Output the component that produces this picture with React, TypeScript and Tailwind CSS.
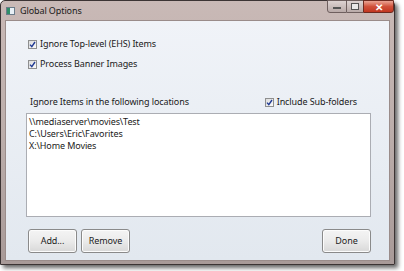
import React from "react";

function Check({ label }: { label: string }) {
  return (
    <div className="flex h-[12px] items-center gap-[3px]">
      <div className="flex h-[9px] w-[9px] items-center justify-center border border-[#8e8f8f] bg-gradient-to-br from-[#dcdcdc] to-[#fafafa]">
        <svg width="7" height="7" viewBox="0 0 7 7">
          <path d="M1 3.6 L2.8 5.6 L6 1" fill="none" stroke="#1f3a93" strokeWidth="1.4" />
        </svg>
      </div>
      <span>{label}</span>
    </div>
  );
}

function Btn({ label }: { label: string }) {
  return (
    <div className="flex h-[24px] w-[49px] items-center justify-center rounded-[3px] border border-[#8a8a8a] bg-gradient-to-b from-[#f4f4f4] via-[#ebebeb] to-[#d8d8d8] text-[#222] shadow-[inset_0_0_0_1px_#fcfcfc]">
      {label}
    </div>
  );
}

export default function App() {
  const paths = ["\\\\mediaserver\\movies\\Test", "C:\\Users\\Eric\\Favorites", "X:\\Home Movies"];

  return (
    <div
      className="h-[271px] w-[404px] overflow-hidden bg-white text-[9px] leading-[12px] tracking-[-0.1px] text-[#1a1a1a]"
      style={{ fontFamily: '"Noto Sans", "Open Sans", sans-serif' }}
    >
      <div className="flex h-[265px] w-[395px] flex-col rounded-t-[5px] border border-[#3c3434] bg-gradient-to-b from-[#c9b9b6] via-[#bcaeab] to-[#a89a98] shadow-[3px_3px_4px_rgba(0,0,0,0.6)]">
        {/* title bar */}
        <div className="relative flex h-[19px] items-center">
          <div className="ml-[5px] flex h-[8px] w-[9px] items-center border border-[#6b7c8a] bg-[#e8f0f6]">
            <div className="h-full w-[3px] bg-[#2f8f6a]" />
          </div>
          <span className="ml-[5px] text-[9px] text-[#1a1a1a]">Global Options</span>
          <div className="absolute right-[0px] top-[-1px] flex h-[13px]">
            <div className="flex w-[20px] items-center justify-center rounded-bl-[3px] border border-[#6e5f5e] bg-gradient-to-b from-[#ddd3d2] to-[#b9aaa8]">
              <div className="mt-[3px] h-[2px] w-[8px] border border-[#555] bg-white" />
            </div>
            <div className="flex w-[16px] items-center justify-center border-y border-[#6e5f5e] bg-gradient-to-b from-[#ddd3d2] to-[#b9aaa8]">
              <div className="h-[7px] w-[8px] border border-[#555] bg-[#e9e9e9]" />
            </div>
            <div className="flex w-[31px] items-center justify-center rounded-br-[3px] border border-[#6e2a20] bg-gradient-to-b from-[#e9a393] via-[#d0513b] to-[#c2351f]">
              <span className="text-[10px] font-bold leading-none text-white">✕</span>
            </div>
          </div>
        </div>

        {/* client */}
        <div className="mx-[4px] mb-[3px] flex flex-1 flex-col border border-[#9a8c8a] bg-gradient-to-b from-[#f0f3f8] to-[#e2e8ef] pl-[20px] pr-[18px]">
          <div className="mt-[17px] flex flex-col gap-[8px] pl-[2px]">
            <Check label="Ignore Top-level (EHS) Items" />
            <Check label="Process Banner Images" />
          </div>
          <div className="mt-[26px] flex items-center justify-between pl-[4px] pr-[14px]">
            <span>Ignore Items in the following locations</span>
            <Check label="Include Sub-folders" />
          </div>
          <div className="mt-[5px] h-[104px] w-full border border-[#abadb3] bg-white px-[2px] pt-[2px]">
            {paths.map((p) => (
              <div key={p}>{p}</div>
            ))}
          </div>
          <div className="mt-[12px] flex gap-[4px] pl-[2px]">
            <Btn label="Add..." />
            <Btn label="Remove" />
            <div className="ml-auto">
              <Btn label="Done" />
            </div>
          </div>
        </div>
      </div>
    </div>
  );
}
